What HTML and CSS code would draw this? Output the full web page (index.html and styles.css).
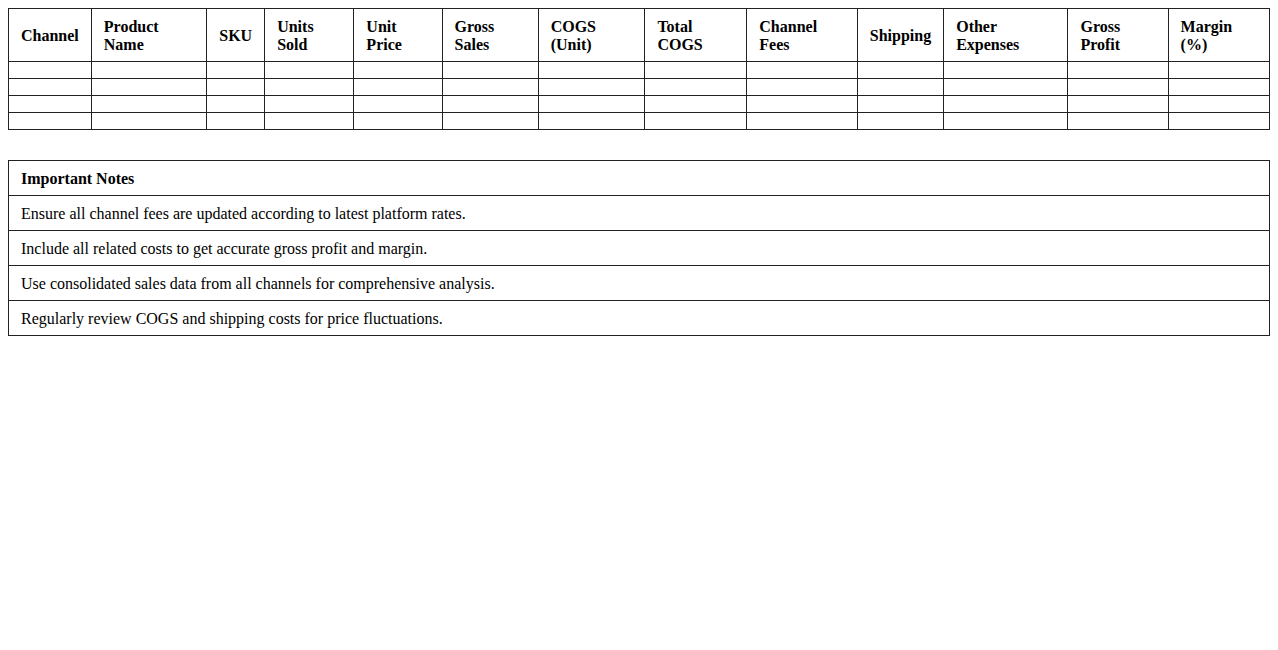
FILE: index.html
```html
<!DOCTYPE html>
<html>
<head>
<meta charset="utf-8">
<link rel="stylesheet" href="styles.css">
</head>
<body>
<table class="grid">
  <thead>
    <tr>
      <th>Channel</th><th>Product Name</th><th>SKU</th><th>Units Sold</th><th>Unit Price</th><th>Gross Sales</th><th>COGS (Unit)</th><th>Total COGS</th><th>Channel Fees</th><th>Shipping</th><th>Other Expenses</th><th>Gross Profit</th><th>Margin (%)</th>
    </tr>
  </thead>
  <tbody>
    <tr><td></td><td></td><td></td><td></td><td></td><td></td><td></td><td></td><td></td><td></td><td></td><td></td><td></td></tr>
    <tr><td></td><td></td><td></td><td></td><td></td><td></td><td></td><td></td><td></td><td></td><td></td><td></td><td></td></tr>
    <tr><td></td><td></td><td></td><td></td><td></td><td></td><td></td><td></td><td></td><td></td><td></td><td></td><td></td></tr>
    <tr><td></td><td></td><td></td><td></td><td></td><td></td><td></td><td></td><td></td><td></td><td></td><td></td><td></td></tr>
  </tbody>
</table>
<table class="notes">
  <tr><th>Important Notes</th></tr>
  <tr><td>Ensure all channel fees are updated according to latest platform rates.</td></tr>
  <tr><td>Include all related costs to get accurate gross profit and margin.</td></tr>
  <tr><td>Use consolidated sales data from all channels for comprehensive analysis.</td></tr>
  <tr><td>Regularly review COGS and shipping costs for price fluctuations.</td></tr>
</table>
</body>
</html>
```
FILE: styles.css
```css
body {
  margin: 8px;
  font-family: "Liberation Serif", "Times New Roman", serif;
  font-size: 16px;
  color: #000;
  background: #fff;
}
table {
  width: 100%;
  border-collapse: collapse;
}
th, td {
  border: 1px solid #222;
  padding: 9px 12px 7px;
  text-align: left;
}
th {
  font-weight: bold;
}
.notes {
  margin-top: 30px;
}
```
